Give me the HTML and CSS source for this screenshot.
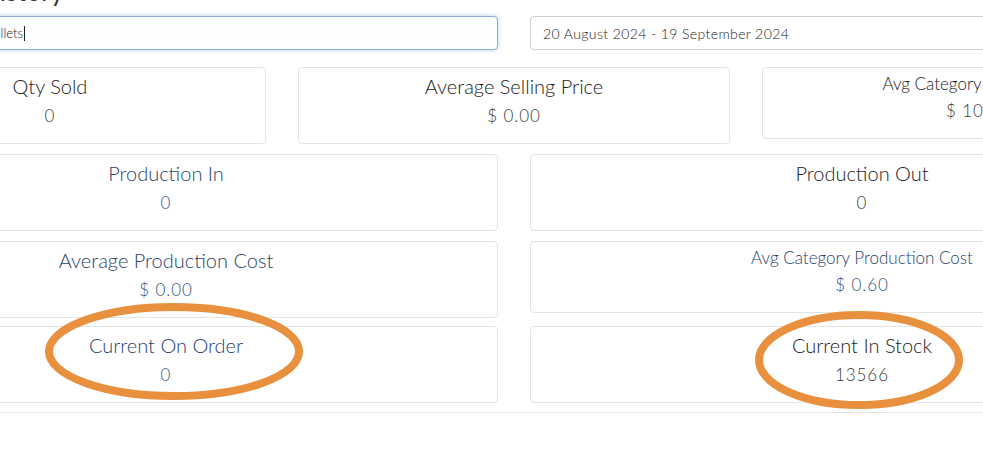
FILE: index.html
```html
<!DOCTYPE html>
<html>
<head>
<meta charset="utf-8">
<link rel="stylesheet" href="styles.css">
</head>
<body>
<div class="page">
  <h3 class="heading">History</h3>
  <div class="grid2 filters">
    <div class="field focus"><span class="val">Pallets</span><span class="caret"></span></div>
    <div class="field date"><span class="val">20 August 2024 - 19 September 2024</span></div>
  </div>
  <div class="grid3 row">
    <div class="card"><div class="t">Qty Sold</div><div class="v">0</div></div>
    <div class="card"><div class="t">Average Selling Price</div><div class="v">$ 0.00</div></div>
    <div class="card small"><div class="t">Avg Category Selling Price</div><div class="v">$ 10.00</div></div>
  </div>
  <div class="grid2 row">
    <div class="card blue"><div class="t">Production In</div><div class="v">0</div></div>
    <div class="card"><div class="t">Production Out</div><div class="v">0</div></div>
  </div>
  <div class="grid2 row tight">
    <div class="card blue"><div class="t">Average Production Cost</div><div class="v">$ 0.00</div></div>
    <div class="card blue small"><div class="t">Avg Category Production Cost</div><div class="v">$ 0.60</div></div>
  </div>
  <div class="grid2 row">
    <div class="card blue"><div class="t">Current On Order</div><div class="v">0</div></div>
    <div class="card"><div class="t">Current In Stock</div><div class="v">13566</div></div>
  </div>
  <div class="rule"></div>
</div>
<svg class="annot" width="983" height="465" viewBox="0 0 983 465">
  <ellipse cx="174" cy="351.5" rx="125" ry="44.5" fill="none" stroke="#e8903d" stroke-width="8"/>
  <ellipse cx="859" cy="360" rx="100" ry="45" fill="none" stroke="#e8903d" stroke-width="8"/>
</svg>
</body>
</html>
```
FILE: styles.css
```css
html, body {
  margin: 0;
  padding: 0;
  background: #ffffff;
  overflow: hidden;
}
body {
  position: relative;
  width: 983px;
  height: 465px;
  font-family: "Lato", "Liberation Sans", sans-serif;
  font-weight: 300;
  color: #222;
}
.page {
  margin-left: -166px;
  width: 1360px;
}
.heading {
  margin: -24px 0 10px 146px;
  font-size: 26px;
  line-height: 30px;
  font-weight: 400;
  color: #333;
}
.grid2 {
  display: grid;
  grid-template-columns: 664px 664px;
  column-gap: 32px;
  align-items: start;
}
.grid3 {
  display: grid;
  grid-template-columns: 432px 432px 432px;
  column-gap: 32px;
  align-items: start;
}
.filters {
  margin-bottom: 17px;
}
.field {
  height: 34px;
  box-sizing: border-box;
  border: 1px solid #cfcfcf;
  border-radius: 4px;
  display: flex;
  align-items: center;
  padding-left: 12px;
  font-size: 14px;
  font-weight: 300;
  letter-spacing: 0.4px;
  color: #222;
  background: #fff;
}
.field.focus {
  border-color: #8fb0cf;
  box-shadow: 0 0 4px rgba(102, 160, 220, 0.55);
  background: #fbfdff;
  padding-left: 152px;
  font-size: 13px;
  letter-spacing: 0;
  color: #222;
}
.caret {
  display: inline-block;
  width: 1px;
  height: 15px;
  background: #222;
  margin-left: 1px;
}
.row {
  margin-bottom: 10px;
}
.row.tight {
  margin-bottom: 8px;
}
.card {
  border: 1px solid #e4e4e4;
  border-radius: 4px;
  background: #fff;
  padding: 6px 10px 15px;
  text-align: center;
}
.card .t {
  font-size: 20px;
  line-height: 24px;
  color: #1c1c1c;
}
.card .v {
  margin-top: 6px;
  font-size: 17px;
  line-height: 24px;
  color: #3a3a3a;
  letter-spacing: 0.9px;
}
.card.small .t {
  font-size: 17px;
  line-height: 18px;
}
.card.small {
  padding-top: 7px;
}
.card.blue .t {
  color: #27436c;
}
.card.blue .v {
  color: #34547f;
}
.rule {
  height: 1px;
  background: #e6e6e6;
  margin-top: -1px;
}
.annot {
  position: absolute;
  left: 0;
  top: 0;
  pointer-events: none;
}
```
